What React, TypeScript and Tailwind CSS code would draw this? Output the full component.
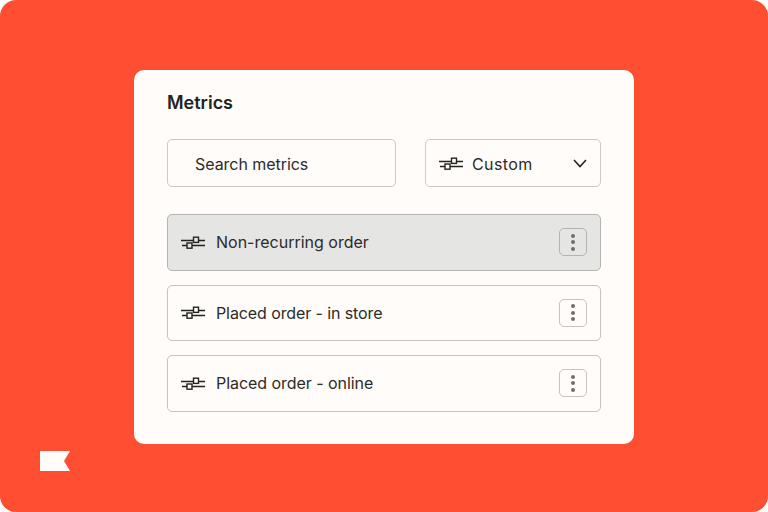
function Sliders() {
  return (
    <svg width="24" height="13" viewBox="0 0 24 13" fill="none" stroke="#232321" strokeWidth="1.4" className="shrink-0">
      <path d="M0 4.5H12.5M17.5 4.5H24M1 9.5H6M11 9.5H24" />
      <rect x="12.5" y="1.2" width="5" height="5.2" />
      <rect x="6" y="7" width="5" height="5.2" />
    </svg>
  );
}
function Row({ label, active, track }: { label: string; active?: boolean; track: string }) {
  return (
    <div className={`h-[56.5px] rounded-[5px] border flex items-center pl-[13px] pr-[13px] ${active ? "bg-[#e5e5e3] border-[#b5b3ae]" : "border-[#c6c4bf]"}`}>
      <Sliders />
      <span className={`ml-[11px] text-[16px] text-[#2b2b29] ${track}`}>{label}</span>
      <div className={`ml-auto w-[28px] h-[28px] rounded-[5px] border flex flex-col items-center justify-center gap-[2.5px] ${active ? "border-[#b5b3ae]" : "border-[#c6c4bf]"}`}>
        <i className="w-[4px] h-[4px] rounded-full bg-[#6f6f6c]" />
        <i className="w-[4px] h-[4px] rounded-full bg-[#6f6f6c]" />
        <i className="w-[4px] h-[4px] rounded-full bg-[#6f6f6c]" />
      </div>
    </div>
  );
}
export default function App() {
  return (
    <div className="w-[768px] h-[512px] bg-white">
      <div className="w-full h-full rounded-[16px] bg-[#ff4e32] flex flex-col items-center pt-[70px] relative font-['Inter',sans-serif]">
        <div className="w-[500px] h-[374px] rounded-[10px] bg-[#fffcf9] px-[33px] pt-[22px]">
          <div className="text-[18px] leading-[22px] font-semibold text-[#232321]">Metrics</div>
          <div className="flex gap-[29px] mt-[25px]">
            <div className="w-[229px] h-[48px] rounded-[5px] border border-[#cdcac5] flex items-center pl-[27px] pt-[1px] text-[16px] tracking-[-0.05px] text-[#2b2b29]">Search metrics</div>
            <div className="w-[176px] h-[48px] rounded-[5px] border border-[#cdcac5] flex items-center pl-[13px] pr-[13px] text-[16px] text-[#2b2b29]">
              <Sliders />
              <span className="ml-[9px] pt-[1px] tracking-[0.4px]">Custom</span>
              <svg className="ml-auto" width="14" height="9" viewBox="0 0 14 9" fill="none" stroke="#232321" strokeWidth="1.6"><path d="M1 1L7 7.5L13 1" /></svg>
            </div>
          </div>
          <div className="flex flex-col gap-[14px] mt-[27px]">
            <Row label="Non-recurring order" active track="tracking-[0px]" />
            <Row label="Placed order - in store" track="tracking-[-0.1px]" />
            <Row label="Placed order - online" track="tracking-[-0.05px]" />
          </div>
        </div>
        <svg className="absolute left-[40px] top-[451px]" width="30" height="20" viewBox="0 0 30 20" fill="#fffcf9"><path d="M0 0H30L24 10L30 20H0Z" /></svg>
      </div>
    </div>
  );
}
